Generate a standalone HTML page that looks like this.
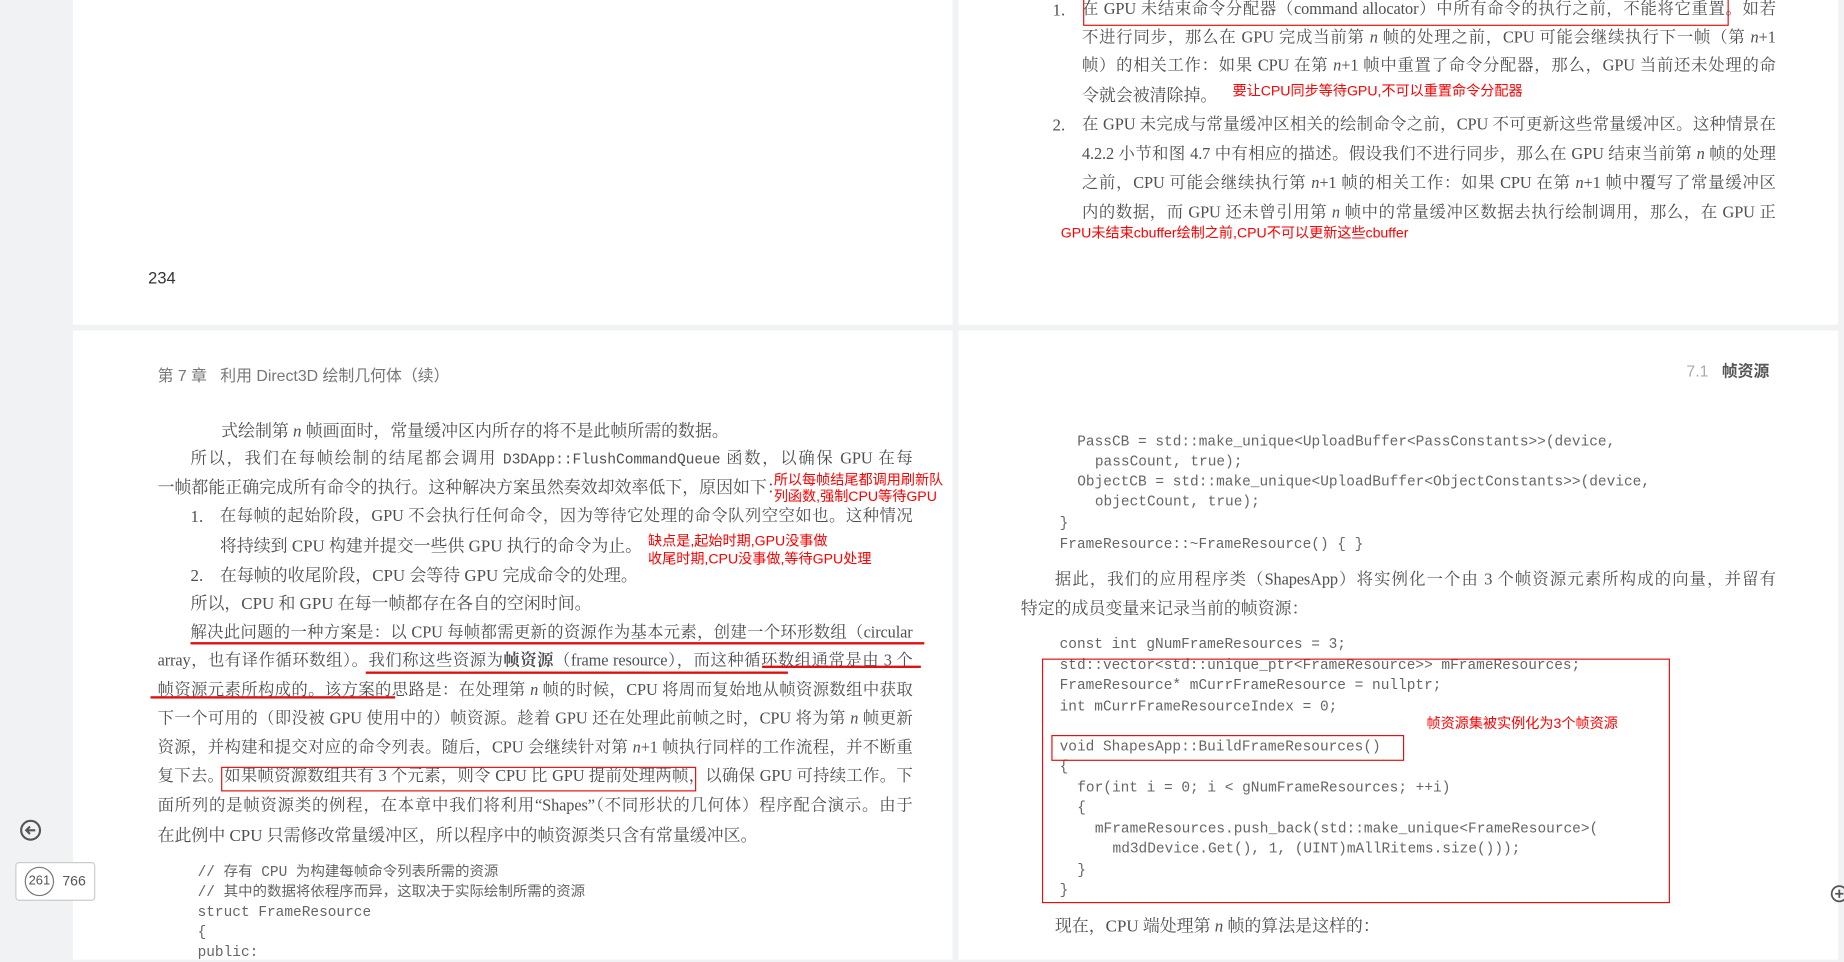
<!DOCTYPE html>
<html><head><meta charset="utf-8">
<style>
html,body{margin:0;padding:0;width:1844px;height:960px;overflow:hidden;background:#f1f2f4}
#w{position:absolute;left:0;top:0;width:1568px;height:816px;transform:scale(1.17602);transform-origin:0 0}
.pg{position:absolute;background:#fff}
.t{position:absolute;height:20px;line-height:20px;font-family:"Liberation Serif","Noto Serif CJK SC",serif;font-size:14.4px;color:#505050;white-space:nowrap;overflow:visible}
.j{white-space:normal;text-align:justify;text-align-last:justify;overflow:hidden;font-size:13.9px;letter-spacing:-0.1px}
.c{position:absolute;font-family:"Liberation Mono","Noto Sans CJK SC",monospace;font-size:12.3px;color:#666;white-space:pre;line-height:16px;height:16px}
.r{position:absolute;font-family:"Liberation Sans","Noto Sans CJK SC",sans-serif;font-size:12px;color:#f00;white-space:nowrap;line-height:14px}
.box{position:absolute;border:1.6px solid #e01010;box-sizing:border-box}
.ul{position:absolute;height:2px;background:#e01010}
i{font-style:italic}
</style></head><body><div id="w">
<div class="pg" style="left:62px;top:0;width:748px;height:276px"></div>
<div class="pg" style="left:815px;top:0;width:748px;height:276px"></div>
<div class="pg" style="left:62px;top:281px;width:748px;height:535px"></div>
<div class="pg" style="left:815px;top:281px;width:748px;height:535px"></div>

<div class="t" style="left:126px;top:226px;font-family:'Liberation Sans',sans-serif;font-size:14px;color:#333">234</div>

<div class="t" style="left:895px;top:-1px">1.</div>
<div class="t j" style="left:920px;top:-1px;width:590px">在 GPU 未结束命令分配器（command allocator）中所有命令的执行之前，不能将它重置。如若</div>
<div class="box" style="left:921px;top:-3px;width:549px;height:25px"></div>
<div class="t j" style="left:920px;top:23px;width:590px">不进行同步，那么在 GPU 完成当前第 <i>n</i> 帧的处理之前，CPU 可能会继续执行下一帧（第 <i>n</i>+1</div>
<div class="t j" style="left:920px;top:47px;width:590px">帧）的相关工作：如果 CPU 在第 <i>n</i>+1 帧中重置了命令分配器，那么，GPU 当前还未处理的命</div>
<div class="t" style="left:920px;top:72px">令就会被清除掉。</div>
<div class="r" style="left:1048px;top:70px">要让CPU同步等待GPU,不可以重置命令分配器</div>
<div class="t" style="left:895px;top:97px">2.</div>
<div class="t j" style="left:920px;top:97px;width:590px">在 GPU 未完成与常量缓冲区相关的绘制命令之前，CPU 不可更新这些常量缓冲区。这种情景在</div>
<div class="t j" style="left:920px;top:122px;width:590px">4.2.2 小节和图 4.7 中有相应的描述。假设我们不进行同步，那么在 GPU 结束当前第 <i>n</i> 帧的处理</div>
<div class="t j" style="left:920px;top:147px;width:590px">之前，CPU 可能会继续执行第 <i>n</i>+1 帧的相关工作：如果 CPU 在第 <i>n</i>+1 帧中覆写了常量缓冲区</div>
<div class="t j" style="left:920px;top:172px;width:590px">内的数据，而 GPU 还未曾引用第 <i>n</i> 帧中的常量缓冲区数据去执行绘制调用，那么，在 GPU 正</div>
<div class="r" style="left:902px;top:191px">GPU未结束cbuffer绘制之前,CPU不可以更新这些cbuffer</div>

<div class="t" style="left:134px;top:310px;font-family:'Liberation Sans','Noto Sans CJK SC',sans-serif;font-size:13.5px;color:#777">第 7 章 &nbsp;&nbsp;利用 Direct3D 绘制几何体（续）</div>
<div class="t" style="left:188px;top:357px">式绘制第 <i>n</i> 帧画面时，常量缓冲区内所存的将不是此帧所需的数据。</div>
<div class="t j" style="left:162px;top:381px;width:614px">所以，我们在每帧绘制的结尾都会调用 <span style="font-family:'Liberation Mono',monospace;font-size:12.5px">D3DApp::FlushCommandQueue</span> 函数，以确保 GPU 在每</div>
<div class="t" style="left:134px;top:405px">一帧都能正确完成所有命令的执行。这种解决方案虽然奏效却效率低下，原因如下：</div>
<div class="r" style="left:658px;top:401px">所以每帧结尾都调用刷新队</div>
<div class="r" style="left:658px;top:415px">列函数,强制CPU等待GPU</div>
<div class="t" style="left:162px;top:430px">1.</div>
<div class="t j" style="left:187px;top:430px;width:589px">在每帧的起始阶段，GPU 不会执行任何命令，因为等待它处理的命令队列空空如也。这种情况</div>
<div class="t" style="left:187px;top:455px">将持续到 CPU 构建并提交一些供 GPU 执行的命令为止。</div>
<div class="r" style="left:551px;top:453px">缺点是,起始时期,GPU没事做</div>
<div class="r" style="left:551px;top:468px">收尾时期,CPU没事做,等待GPU处理</div>
<div class="t" style="left:162px;top:480px">2.</div>
<div class="t" style="left:187px;top:480px">在每帧的收尾阶段，CPU 会等待 GPU 完成命令的处理。</div>
<div class="t" style="left:162px;top:504px">所以，CPU 和 GPU 在每一帧都存在各自的空闲时间。</div>
<div class="t j" style="left:162px;top:529px;width:614px">解决此问题的一种方案是：以 CPU 每帧都需更新的资源作为基本元素，创建一个环形数组（circular</div>
<div class="ul" style="left:162px;top:546px;width:624px"></div>
<div class="t j" style="left:134px;top:553px;width:642px">array，也有译作循环数组）。我们称这些资源为<b>帧资源</b>（frame resource），而这种循环数组通常是由 3 个</div>
<div class="ul" style="left:311px;top:571px;width:359px"></div>
<div class="ul" style="left:648px;top:566px;width:135px"></div>
<div class="t j" style="left:134px;top:578px;width:642px">帧资源元素所构成的。该方案的思路是：在处理第 <i>n</i> 帧的时候，CPU 将周而复始地从帧资源数组中获取</div>
<div class="ul" style="left:128px;top:592px;width:208px"></div>
<div class="t j" style="left:134px;top:602px;width:642px">下一个可用的（即没被 GPU 使用中的）帧资源。趁着 GPU 还在处理此前帧之时，CPU 将为第 <i>n</i> 帧更新</div>
<div class="t j" style="left:134px;top:627px;width:642px">资源，并构建和提交对应的命令列表。随后，CPU 会继续针对第 <i>n</i>+1 帧执行同样的工作流程，并不断重</div>
<div class="t j" style="left:134px;top:651px;width:642px">复下去。如果帧资源数组共有 3 个元素，则令 CPU 比 GPU 提前处理两帧，以确保 GPU 可持续工作。下</div>
<div class="box" style="left:188px;top:652px;width:404px;height:21px"></div>
<div class="t j" style="left:134px;top:676px;width:642px">面所列的是帧资源类的例程，在本章中我们将利用“Shapes”（不同形状的几何体）程序配合演示。由于</div>
<div class="t" style="left:134px;top:701px">在此例中 CPU 只需修改常量缓冲区，所以程序中的帧资源类只含有常量缓冲区。</div>
<div class="c" style="left:168px;top:734px">// 存有 CPU 为构建每帧命令列表所需的资源</div>
<div class="c" style="left:168px;top:751px">// 其中的数据将依程序而异，这取决于实际绘制所需的资源</div>
<div class="c" style="left:168px;top:768px">struct FrameResource</div>
<div class="c" style="left:168px;top:785px">{</div>
<div class="c" style="left:168px;top:802px">public:</div>

<svg style="position:absolute;left:16px;top:696px" width="20" height="20" viewBox="0 0 20 20"><circle cx="10" cy="10" r="8" fill="none" stroke="#555" stroke-width="1.8"/><path d="M14 10H6.5M9.5 6.8L6.3 10l3.2 3.2" fill="none" stroke="#555" stroke-width="1.8"/></svg>
<div style="position:absolute;left:13px;top:733px;width:68px;height:33px;border:1px solid #ccc;border-radius:3px;background:#fff;box-sizing:border-box"></div>
<div style="position:absolute;left:21px;top:737px;width:25px;height:25px;border:1.5px solid #777;border-radius:50%;box-sizing:border-box;font:11px 'Liberation Sans',sans-serif;color:#555;text-align:center;line-height:22px">261</div>
<div style="position:absolute;left:53px;top:742px;font:12px 'Liberation Sans',sans-serif;color:#555">766</div>

<div class="t" style="left:1434px;top:306px;font-family:'Liberation Sans','Noto Sans CJK SC',sans-serif;font-size:13.5px;color:#777"><span style="color:#aaa">7.1</span> &nbsp;&nbsp;<b style="color:#555">帧资源</b></div>
<div class="c" style="left:916px;top:368px">PassCB = std::make_unique&lt;UploadBuffer&lt;PassConstants&gt;&gt;(device,</div>
<div class="c" style="left:931px;top:385px">passCount, true);</div>
<div class="c" style="left:916px;top:402px">ObjectCB = std::make_unique&lt;UploadBuffer&lt;ObjectConstants&gt;&gt;(device,</div>
<div class="c" style="left:931px;top:419px">objectCount, true);</div>
<div class="c" style="left:901px;top:437px">}</div>
<div class="c" style="left:901px;top:455px">FrameResource::~FrameResource() { }</div>
<div class="t j" style="left:897px;top:484px;width:613px">据此，我们的应用程序类（ShapesApp）将实例化一个由 3 个帧资源元素所构成的向量，并留有</div>
<div class="t" style="left:868px;top:508px">特定的成员变量来记录当前的帧资源：</div>
<div class="c" style="left:901px;top:540px">const int gNumFrameResources = 3;</div>
<div class="c" style="left:901px;top:558px">std::vector&lt;std::unique_ptr&lt;FrameResource&gt;&gt; mFrameResources;</div>
<div class="c" style="left:901px;top:575px">FrameResource* mCurrFrameResource = nullptr;</div>
<div class="c" style="left:901px;top:593px">int mCurrFrameResourceIndex = 0;</div>
<div class="r" style="left:1213px;top:608px">帧资源集被实例化为3个帧资源</div>
<div class="c" style="left:901px;top:627px">void ShapesApp::BuildFrameResources()</div>
<div class="c" style="left:901px;top:644px">{</div>
<div class="c" style="left:916px;top:662px">for(int i = 0; i &lt; gNumFrameResources; ++i)</div>
<div class="c" style="left:916px;top:679px">{</div>
<div class="c" style="left:931px;top:697px">mFrameResources.push_back(std::make_unique&lt;FrameResource&gt;(</div>
<div class="c" style="left:946px;top:714px">md3dDevice.Get(), 1, (UINT)mAllRitems.size()));</div>
<div class="c" style="left:916px;top:732px">}</div>
<div class="c" style="left:901px;top:749px">}</div>
<div class="box" style="left:886px;top:560px;width:534px;height:208px"></div>
<div class="box" style="left:894px;top:625px;width:300px;height:22px"></div>
<div class="t" style="left:897px;top:778px">现在，CPU 端处理第 <i>n</i> 帧的算法是这样的：</div>
<svg style="position:absolute;left:1556px;top:752px" width="16" height="16" viewBox="0 0 16 16"><circle cx="8" cy="8" r="6.5" fill="none" stroke="#555" stroke-width="1.5"/><path d="M8 4.5v7M4.5 8h7" stroke="#555" stroke-width="1.5"/></svg>
</div></body></html>
